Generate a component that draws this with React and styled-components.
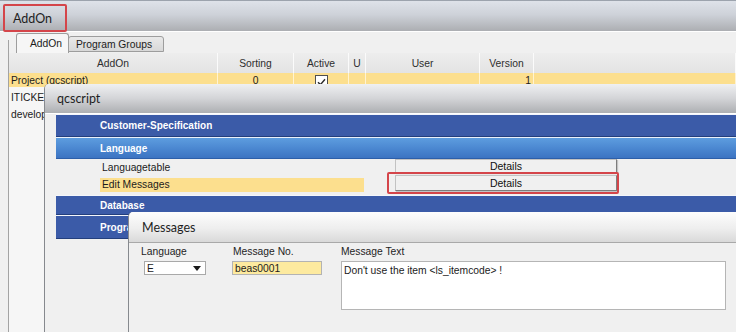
import React from 'react';
import styled, { createGlobalStyle } from 'styled-components';

const GlobalStyle = createGlobalStyle`
  html, body {
    margin: 0;
    padding: 0;
    background: #f0f0f0;
  }
  body {
    font-family: 'Liberation Sans', Arial, sans-serif;
    font-size: 10.3px;
    color: #1b1b1b;
  }
`;

const Desktop = styled.div`
  position: relative;
  width: 736px;
  height: 332px;
  overflow: hidden;
  background: #f0f0f0;
`;

// windows sit on the desktop at their own coordinates
const Window = styled.div`
  position: absolute;
  left: ${(p) => p.$x}px;
  top: ${(p) => p.$y}px;
  width: ${(p) => p.$w}px;
  height: ${(p) => p.$h}px;
  display: flex;
  flex-direction: column;
  background: #f0f0f0;
  border-left: ${(p) => (p.$framed ? '1px solid #86898e' : 'none')};
  border-top-left-radius: ${(p) => (p.$framed ? '5px' : '0')};
  overflow: hidden;
`;

const tones = {
  blue: 'linear-gradient(#dee2e9 0%, #ced2d9 45%, #acaeb2 100%)',
  gray: 'linear-gradient(#eff0f2 0%, #d3d4d7 50%, #adafb2 100%)',
  light: 'linear-gradient(#fdfdfd 0%, #eeeeee 55%, #d9d9d9 100%)',
};

const TitleBar = styled.div`
  flex: none;
  display: flex;
  align-items: ${(p) => (p.$top ? 'flex-start' : 'center')};
  height: ${(p) => p.$h}px;
  padding-left: ${(p) => p.$pad}px;
  padding-top: ${(p) => (p.$top ? 3 : 0)}px;
  box-sizing: border-box;
  background: ${(p) => tones[p.$tone]};
  border-top: ${(p) => (p.$tone === 'blue' ? '1px solid #9ca3ad' : 'none')};
  border-bottom: 1px solid ${(p) => (p.$tone === 'light' ? '#a9a9a9' : '#ffffff')};
  font-family: Lato, 'Liberation Sans', sans-serif;
  font-size: 12.5px;
  color: #1e1e1e;
`;

const TitleMark = styled.span`
  display: flex;
  align-items: center;
  height: 28px;
  box-sizing: border-box;
  padding: 0 13px 0 8px;
  border: 2px solid #d4454a;
  border-radius: 2px;
`;

/* ---------- AddOn window ---------- */

const AddOnBody = styled.div`
  flex: 1;
  display: flex;
  flex-direction: column;
  padding-left: 8px;
`;

const TabStrip = styled.div`
  flex: none;
  height: 21px;
  display: flex;
  align-items: flex-end;
  padding-left: 8px;
  background: linear-gradient(#a3a3a3, #a3a3a3) left 8px / 1px 100% no-repeat;
`;

const Tab = styled.div`
  box-sizing: border-box;
  height: ${(p) => (p.$active ? 20 : 16)}px;
  width: ${(p) => (p.$active ? 53 : 96)}px;
  margin-left: ${(p) => (p.$active ? 0 : -1)}px;
  margin-bottom: ${(p) => (p.$active ? 0 : 1)}px;
  padding-left: ${(p) => (p.$active ? 13 : 7)}px;
  display: flex;
  align-items: center;
  border: 1px solid #9d9d9d;
  border-bottom: ${(p) => (p.$active ? 'none' : '1px solid #9d9d9d')};
  border-radius: 3px 3px 0 0;
  background: ${(p) => (p.$active ? '#f6f6f6' : 'linear-gradient(#e9e9e9, #d8d8d8)')};
  position: relative;
  z-index: ${(p) => (p.$active ? 1 : 0)};
`;

const Table = styled.div`
  flex: 1;
  display: grid;
  grid-template-columns: 209px 76px 55px 17px 114px 54px 1fr;
  grid-template-rows: 20px;
  grid-auto-rows: 17px;
  align-content: start;
  border-left: 1px solid #a3a3a3;
  background: #f6f6f6;
`;

const HeadCell = styled.div`
  display: flex;
  align-items: center;
  justify-content: center;
  background: linear-gradient(#ededed, #e3e3e3);
  border-right: 1px solid #fbfbfb;
  color: #2e2e2e;
`;

const Cell = styled.div`
  display: flex;
  align-items: flex-start;
  justify-content: ${(p) => p.$align || 'flex-start'};
  padding: 1px 2px 0;
  white-space: nowrap;
  overflow: hidden;
  line-height: 13px;
  background: ${(p) =>
    p.$selected ? 'linear-gradient(#fcdf8e 0 14px, transparent 14px)' : 'transparent'};
  border-right: ${(p) => (p.$selected ? '1px solid #fff3d2' : 'none')};
`;

const CheckBox = styled.span`
  display: inline-flex;
  align-items: center;
  justify-content: center;
  width: 13px;
  height: 13px;
  box-sizing: border-box;
  margin-top: 1px;
  border: 1px solid #4f4f4f;
  background: #ffffff;
`;

/* ---------- qcscript window ---------- */

const ScriptBody = styled.div`
  flex: 1;
  display: flex;
  flex-direction: column;
  padding-left: 11px;
`;

const Band = styled.div`
  flex: none;
  display: flex;
  align-items: center;
  height: ${(p) => p.$h}px;
  margin-top: ${(p) => p.$gap || 0}px;
  padding-left: 44px;
  box-sizing: border-box;
  color: #ffffff;
  font-weight: bold;
  font-size: 10px;
  background: ${(p) =>
    p.$open ? 'linear-gradient(#5d9ddf, #4a86d0 55%, #3c74c2)' : '#3b5ba8'};
  border-top: 1px solid ${(p) => (p.$open ? '#e9f1fb' : '#f4f6fb')};
  border-bottom: 1px solid ${(p) => (p.$open ? '#2d5fa9' : '#233f7d')};
`;

const ItemRow = styled.div`
  flex: none;
  height: 17px;
  display: flex;
  align-items: center;
  padding-left: 44px;
`;

const ItemText = styled.span`
  display: flex;
  align-items: center;
  height: 14px;
  width: 262px;
  padding-left: 2px;
  background: ${(p) => (p.$selected ? '#fcdf8e' : 'transparent')};
`;

/* ---------- context menu ---------- */

const Menu = styled.div`
  position: absolute;
  left: 395px;
  top: 159px;
  width: 222px;
  display: flex;
  flex-direction: column;
  gap: 2px;
  z-index: 3;
`;

const MenuItem = styled.div`
  height: ${(p) => p.$h}px;
  display: flex;
  align-items: center;
  justify-content: center;
  box-sizing: border-box;
  background: #f0f0f0;
  border: 1px solid #c2c2c2;
  border-right-color: #7d7d7d;
  border-bottom-color: ${(p) => (p.$last ? '#7d7d7d' : '#c2c2c2')};
  color: #111;
  font-size: 10.5px;
  box-shadow: 1px 1px 1px rgba(0, 0, 0, 0.18);
`;

const RedMark = styled.div`
  position: absolute;
  left: 387px;
  top: 172px;
  width: 232px;
  height: 22px;
  box-sizing: border-box;
  border: 2px solid #d4454a;
  border-radius: 2px;
  z-index: 4;
`;

/* ---------- Messages window ---------- */

const FormRow = styled.div`
  display: flex;
  padding: 3px 0 0 12px;
`;

const Field = styled.div`
  display: flex;
  flex-direction: column;
  width: ${(p) => p.$w}px;
  gap: 3px;
`;

const Label = styled.div`
  height: 12px;
  line-height: 12px;
  color: #1e1e1e;
`;

const Select = styled.div`
  width: 62px;
  height: 14px;
  margin-left: 3px;
  box-sizing: border-box;
  display: flex;
  align-items: center;
  justify-content: space-between;
  padding: 0 4px 0 2px;
  border: 1px solid #a9a9a9;
  background: #ffffff;
`;

const Arrow = styled.span`
  width: 0;
  height: 0;
  border-left: 4.5px solid transparent;
  border-right: 4.5px solid transparent;
  border-top: 5px solid #1a1a1a;
`;

const TextInput = styled.div`
  width: 90px;
  height: 14px;
  margin-left: -1px;
  box-sizing: border-box;
  display: flex;
  align-items: center;
  padding-left: 2px;
  border: 1px solid #b3b3b3;
  background: #fdea9f;
`;

const TextArea = styled.div`
  width: 385px;
  height: 49px;
  box-sizing: border-box;
  padding: 2px 2px;
  border: 1px solid #b5b5b5;
  background: #ffffff;
  line-height: 13px;
`;

const columns = ['AddOn', 'Sorting', 'Active', 'U', 'User', 'Version', ''];

const rows = [
  { name: 'Project (qcscript)', sort: '0', active: true, version: '1', selected: true },
  { name: 'ITICKET' },
  { name: 'development' },
];

const Check = () => (
  <svg width="9" height="8" viewBox="0 0 9 8">
    <path d="M1 4.2 L3.4 6.6 L8 1.2" fill="none" stroke="#2b2b2b" strokeWidth="1.4" />
  </svg>
);

export default function App() {
  return (
    <Desktop>
      <GlobalStyle />

      <Window $x={0} $y={0} $w={736} $h={332}>
        <TitleBar $tone="blue" $h={32} $pad={3} $top>
          <TitleMark>AddOn</TitleMark>
        </TitleBar>
        <AddOnBody>
          <TabStrip>
            <Tab $active>AddOn</Tab>
            <Tab>Program Groups</Tab>
          </TabStrip>
          <Table>
            {columns.map((c, i) => (
              <HeadCell key={i}>{c}</HeadCell>
            ))}
            {rows.map((r) => (
              <React.Fragment key={r.name}>
                <Cell $selected={r.selected}>{r.name}</Cell>
                <Cell $selected={r.selected} $align="center">{r.sort}</Cell>
                <Cell $selected={r.selected} $align="center">
                  {r.active && (
                    <CheckBox>
                      <Check />
                    </CheckBox>
                  )}
                </Cell>
                <Cell $selected={r.selected} />
                <Cell $selected={r.selected} />
                <Cell $selected={r.selected} $align="flex-end">{r.version}</Cell>
                <Cell $selected={r.selected} />
              </React.Fragment>
            ))}
          </Table>
        </AddOnBody>
      </Window>

      <Window $x={44} $y={84} $w={700} $h={260} $framed>
        <TitleBar $tone="gray" $h={30} $pad={12}>qcscript</TitleBar>
        <ScriptBody>
          <Band $h={23}>Customer-Specification</Band>
          <Band $h={22} $open>Language</Band>
          <ItemRow>
            <ItemText>Languagetable</ItemText>
          </ItemRow>
          <ItemRow>
            <ItemText $selected>Edit Messages</ItemText>
          </ItemRow>
          <Band $h={20} $gap={2}>Database</Band>
          <Band $h={24}>Program</Band>
        </ScriptBody>
      </Window>

      <Menu>
        <MenuItem $h={14}>Details</MenuItem>
        <MenuItem $h={16} $last>Details</MenuItem>
      </Menu>
      <RedMark />

      <Window $x={128} $y={212} $w={620} $h={130} $framed>
        <TitleBar $tone="light" $h={31} $pad={13}>Messages</TitleBar>
        <FormRow>
          <Field $w={92}>
            <Label>Language</Label>
            <Select>
              E
              <Arrow />
            </Select>
          </Field>
          <Field $w={108}>
            <Label>Message No.</Label>
            <TextInput>beas0001</TextInput>
          </Field>
          <Field $w={390}>
            <Label>Message Text</Label>
            <TextArea>Don't use the item &lt;ls_itemcode&gt; !</TextArea>
          </Field>
        </FormRow>
      </Window>
    </Desktop>
  );
}
